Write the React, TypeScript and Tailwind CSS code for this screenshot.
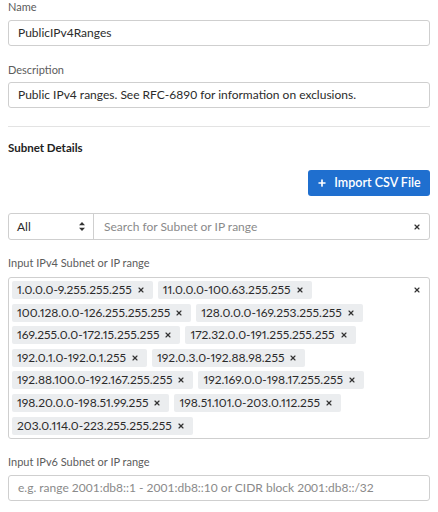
import { Plus, X } from "lucide-react";

const ranges = [
  "1.0.0.0-9.255.255.255",
  "11.0.0.0-100.63.255.255",
  "100.128.0.0-126.255.255.255",
  "128.0.0.0-169.253.255.255",
  "169.255.0.0-172.15.255.255",
  "172.32.0.0-191.255.255.255",
  "192.0.1.0-192.0.1.255",
  "192.0.3.0-192.88.98.255",
  "192.88.100.0-192.167.255.255",
  "192.169.0.0-198.17.255.255",
  "198.20.0.0-198.51.99.255",
  "198.51.101.0-203.0.112.255",
  "203.0.114.0-223.255.255.255",
];

function Label({ children }: { children: React.ReactNode }) {
  return <div className="text-[11px] leading-[14px] text-[#5c5c5c]">{children}</div>;
}

function Tag({ text }: { text: string }) {
  return (
    <div className="flex h-[18px] items-center rounded-[2px] bg-[#ebedef] pl-[5px] pr-[8px] text-[12px] text-[#2b2b2b] proportional-nums">
      <span>{text}</span>
      <X className="ml-[5px] h-[8px] w-[8px] text-[#333]" strokeWidth={3.5} />
    </div>
  );
}

export default function App() {
  return (
    <div className="w-[438px] bg-white px-2 text-[#2b2b2b] [font-family:Lato,'Noto_Sans',sans-serif]">
      <Label>Name</Label>
      <div className="mt-[6px] flex h-[26px] items-center rounded-[3px] border border-[#cfcfcf] px-[9px] text-[12px]">
        PublicIPv4Ranges
      </div>

      <div className="mt-[17px]">
        <Label>Description</Label>
      </div>
      <div className="mt-[5px] flex h-[26px] items-center rounded-[3px] border border-[#cfcfcf] px-[9px] text-[12px]">
        Public IPv4 ranges. See RFC-6890 for information on exclusions.
      </div>

      <div className="mt-[18px] border-t border-[#e3e3e3]" />

      <div className="mt-[13px] text-[11.5px] font-bold leading-[16px] text-[#222]">Subnet Details</div>

      <div className="mt-[14px] flex justify-end">
        <button className="flex h-[26px] w-[122px] items-center justify-center gap-[7px] rounded-[3px] bg-[#1f6fcf] text-[12.5px] font-semibold text-white">
          <Plus className="h-[10px] w-[10px]" strokeWidth={4} />
          Import CSV File
        </button>
      </div>

      <div className="mt-[17px] flex h-[27px] rounded-[3px] border border-[#cfcfcf] text-[12px]">
        <div className="flex w-[85px] items-center justify-between border-r border-[#cfcfcf] pl-[8px] pr-[8px]">
          <span>All</span>
          <svg width="6" height="9" viewBox="0 0 6 9" className="text-[#333]">
            <path d="M3 0L6 3.2H0z M3 9L0 5.8H6z" fill="currentColor" />
          </svg>
        </div>
        <div className="flex flex-1 items-center justify-between pl-[10px] pr-[8px]">
          <span className="text-[#8a8a8a]">Search for Subnet or IP range</span>
          <X className="h-[8px] w-[8px] text-[#333]" strokeWidth={3.5} />
        </div>
      </div>

      <div className="mt-[16px]">
        <Label>Input IPv4 Subnet or IP range</Label>
      </div>
      <div className="mt-[7px] flex rounded-[3px] border border-[#cfcfcf] py-[3px] pl-[3px] pr-[8px]">
        <div className="flex flex-1 flex-wrap gap-x-[5px] gap-y-[4.6px]">
          {ranges.map((r) => (
            <Tag key={r} text={r} />
          ))}
        </div>
        <div className="flex h-[18px] items-center">
          <X className="h-[8px] w-[8px] text-[#333]" strokeWidth={3.5} />
        </div>
      </div>

      <div className="mt-[16px]">
        <Label>Input IPv6 Subnet or IP range</Label>
      </div>
      <div className="mt-[6px] flex h-[26px] items-center rounded-[3px] border border-[#cfcfcf] px-[9px] text-[12px] text-[#8a8a8a]">
        e.g. range 2001:db8::1 - 2001:db8::10 or CIDR block 2001:db8::/32
      </div>
    </div>
  );
}
